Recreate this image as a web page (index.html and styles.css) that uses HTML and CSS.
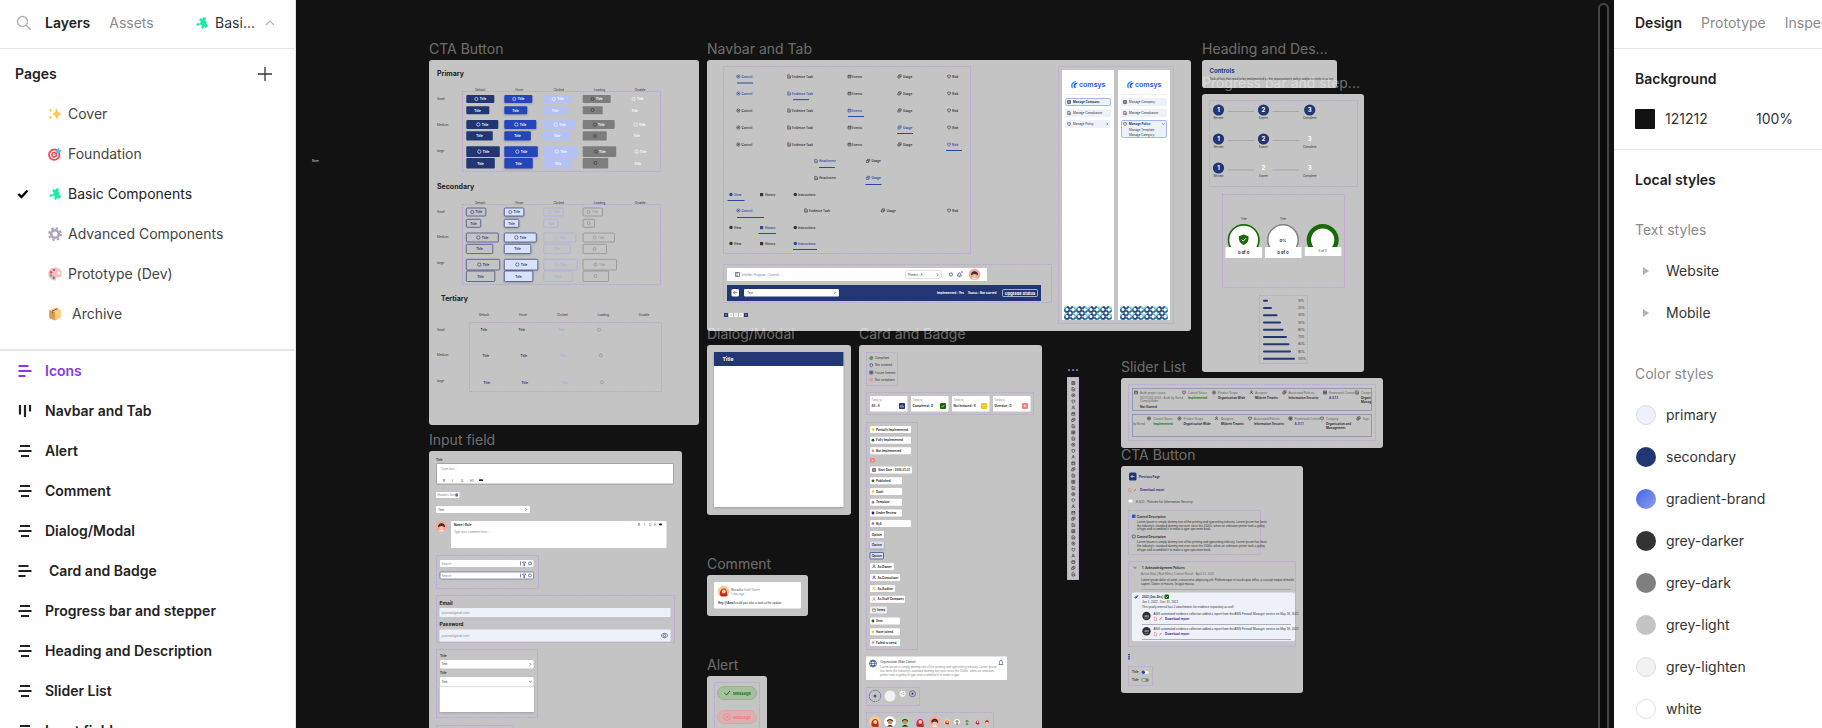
FILE: index.html
```html
<!DOCTYPE html>
<html lang="en">
<head>
<meta charset="utf-8">
<title>Basic Components</title>
<meta name="viewport" content="width=device-width, initial-scale=1">
<link rel="stylesheet" href="styles.css">
</head>
<body>
<svg class="sprite" width="0" height="0" aria-hidden="true">
  <defs>
    <symbol id="puzzle" viewBox="0 0 14 14"><g fill="#1de9a0" transform="rotate(30 7 7)"><path d="M3 3.600h2.500a1.800 1.800 0 1 1 2.800 0h2.500v2.500a1.800 1.800 0 1 1 0 2.800v2.700H8.500a1.700 1.700 0 1 0-3 0H3V9a1.700 1.700 0 1 0 0-3z"/></g></symbol>
    <symbol id="lines-center" viewBox="0 0 14 14"><path d="M2 2h10M.5 7h13M3 12h8"/></symbol>
    <symbol id="lines-left" viewBox="0 0 14 14"><path d="M.5 2h10M.5 7h13M.5 12h7"/></symbol>
    <symbol id="lines-top" viewBox="0 0 14 14"><path d="M2 1v9.500M7 1v12M12 1v6.500"/></symbol>
    <pattern id="rings" x="1064" y="306" width="12" height="7" patternUnits="userSpaceOnUse">
      <rect width="12" height="7" fill="#fff"/>
      <g fill="none" stroke-width="1.300"><circle cx="3" cy="3.500" r="2.200" stroke="#21417c"/><circle cx="9" cy="3.500" r="2.200" stroke="#5fb7c6"/><circle cx="0" cy="0" r="2.200" stroke="#7cc9d3"/><circle cx="12" cy="0" r="2.200" stroke="#7cc9d3"/><circle cx="6" cy="0" r="2.200" stroke="#21417c"/><circle cx="0" cy="7" r="2.200" stroke="#2d6296"/><circle cx="12" cy="7" r="2.200" stroke="#2d6296"/><circle cx="6" cy="7" r="2.200" stroke="#21417c"/></g>
    </pattern>
    <g id="face"><circle r="5.800"/><path fill="#3b2320" d="M-3.300.5C-4-4.500 4-4.500 3.300.5L2 1h-4z"/><circle cy=".8" r="2.200" fill="#f3c9a5"/><path fill="#3b2320" d="M-2.300.2C-1.500-2 1.500-2 2.300.2L0-.4z"/><path fill="#f7ead8" d="M-2.800 5C-2 2.700 2 2.700 2.800 5z"/></g>
    <g id="face-red"><circle r="5.800"/><path fill="#c62f2b" d="M-3.400 4C-5-4 4-6 3.600 2.500L4 4.500z"/><circle cx=".3" r="1.900" fill="#f8cfae"/><path fill="#b4231f" d="M-2.800 4.700C-2 2.200 2.300 2.200 3.300 4.700z"/></g>
    <g id="face-dark"><circle r="5.800"/><path fill="#39241e" d="M-3-.5C-3.500-4 3.500-4 3-.5z"/><circle cy=".2" r="2.200" fill="#c98f68"/><path fill="#333" d="M-3 4.800C-2 2.400 2 2.400 3 4.800z"/></g>
    <g id="ic1"><circle r="1.600"/><path d="M-.8 0H.8M0-.8V.8"/></g>
    <g id="ic2"><path d="M-1.300-1.600H.6l.8.8v2.400h-2.700zM-.6.3H.8"/></g>
    <g id="ic3"><path d="M-1.500-1.200h3v2.600h-3zM-1.500-.4h3M-.7-1.200v-.5M.7-1.200v-.5"/></g>
    <g id="ic4"><path d="M-1.600-.5h2v2h-2zM-.7-.5v-1.200h2.300v2H.4"/></g>
    <g id="ic5"><path d="M-1.400-1.200Q0-1.200 0-1.700 0-1.200 1.400-1.200 1.700 1.200 0 1.700-1.700 1.200-1.400-1.200z"/></g>
    <g id="ic6"><path d="M-1.500 1.500C-1.300-.2 1.300-.2 1.500 1.500M0-1.600a.8.800 0 0 1 0 1.600.8.800 0 0 1 0-1.600"/></g>
    <g id="ic7"><path d="M-1.500-1.500h3v3h-3zM-1.500 0h3M0-1.500v3"/></g>
    <g id="file-icons"><path class="s-red" d="M-1.200-1.500h1.500l.9.900v2.300h-2.400z"/><path class="s-olive" d="M4 1.300 6-1.200"/></g>
  </defs>
</svg>

<main class="app">
  <aside class="layers">
    <header class="layers-head">
      <svg class="search" width="16" height="16" viewBox="0 0 16 16" aria-hidden="true"><circle cx="6.500" cy="6.500" r="5"/><path d="m10.200 10.200 4.500 4.500"/></svg>
      <nav class="tabs"><button class="tab tab--on">Layers</button><button class="tab">Assets</button></nav>
      <button class="page-pick"><svg width="14" height="14" aria-hidden="true"><use href="#puzzle"/></svg><span>Basi...</span><svg class="caret" width="10" height="6" viewBox="0 0 10 6" aria-hidden="true"><path d="m1 5 4-4 4 4"/></svg></button>
    </header>
    <section class="pages">
      <div class="pages-head"><h2>Pages</h2><button class="add" aria-label="Add page"><svg width="14" height="14" viewBox="0 0 14 14"><path d="M7 0v14M0 7h14"/></svg></button></div>
      <ul class="list">
        <li><button class="page"><i></i><svg width="14" height="14" viewBox="0 0 14 14"><path fill="#fcc84b" d="M8.800.8c.7 3.600 1.300 4.900 4.900 6.200-3.600 1.300-4.200 2.600-4.900 6.200C8 9.600 7.300 8.300 4 7 7.300 5.700 8 4.400 8.800.8zM2.600 1.200c.3 1.300.6 1.600 1.800 2-1.200.4-1.500.7-1.800 2-.3-1.300-.6-1.600-1.800-2 1.200-.4 1.500-.7 1.800-2zM2.300 8.300c.3 1.400.7 1.700 2 2.200-1.300.5-1.700.8-2 2.200-.3-1.400-.7-1.700-2-2.200 1.300-.5 1.700-.8 2-2.200z"/></svg>Cover</button></li>
        <li><button class="page"><i></i><svg width="14" height="14" viewBox="0 0 14 14"><circle cx="6.200" cy="7.700" r="5.200" fill="#fff" stroke="#f2484b" stroke-width="1.800"/><circle cx="6.200" cy="7.700" r="2.200" fill="#fff" stroke="#f2484b" stroke-width="1.600"/><path stroke="#3a8fd0" stroke-width="1" d="m6.200 7.700 4-4"/><path fill="#58b7f4" d="m7.500 4.200 3-3.700.6 2.200 2.600.5-3 3.200-3-.3z"/></svg>Foundation</button></li>
        <li><button class="page page--on"><i><svg width="12" height="10" viewBox="0 0 12 10"><path d="m1.500 5 3 3 6-6.500"/></svg></i><svg width="14" height="14"><use href="#puzzle"/></svg>Basic Components</button></li>
        <li><button class="page"><i></i><svg width="14" height="14" viewBox="0 0 14 14"><circle cx="7" cy="7" r="5.800" fill="none" stroke="#aea3bb" stroke-width="2.200" stroke-dasharray="2.400 2.155"/><circle cx="7" cy="7" r="3.800" fill="none" stroke="#aea3bb" stroke-width="2.600"/></svg>Advanced Components</button></li>
        <li><button class="page"><i></i><svg width="14" height="14" viewBox="0 0 14 14"><path fill="#fdbfb2" fill-rule="evenodd" d="M7 .6c4 0 6.800 2.700 6.800 5.900 0 3-2 4-4.100 3.700-1.300-.1-1.700.6-1.500 1.500.3 1.300-.5 1.900-1.700 1.800C3 13.300.3 10.700.3 7S3.200.6 7 .6zm3.900 4a1.400 1.400 0 1 0 0 2.800 1.400 1.400 0 0 0 0-2.800z"/><circle cx="6" cy="3" r="1.200" fill="#8b6cf0"/><circle cx="3" cy="5.200" r="1.200" fill="#f0349c"/><circle cx="3" cy="8.500" r="1.200" fill="#2ac77f"/><circle cx="5.800" cy="10.800" r="1.200" fill="#6f63ee"/></svg>Prototype (Dev)</button></li>
        <li><button class="page page--indent"><i></i><svg width="14" height="14" viewBox="0 0 14 14"><path fill="#fdcb7d" d="M1.300 3.200 7.800.6l5 2.200v7.700l-5.600 3-5.900-2.500z"/><path fill="#e09b4c" d="m1.300 3.200 5.900 2.200v8.100l-5.900-2.500z"/><path fill="#8d6748" d="m3.900 3.600 5.500-2.400 1.100.5-5.400 2.500v2.600l-1.200-.6z"/></svg>Archive</button></li>
      </ul>
    </section>
    <ul class="list list--layers">
      <li><button class="layer layer--component"><svg width="14" height="14"><use href="#lines-left"/></svg>Icons</button></li>
      <li><button class="layer"><svg width="14" height="14"><use href="#lines-top"/></svg>Navbar and Tab</button></li>
      <li><button class="layer"><svg width="14" height="14"><use href="#lines-center"/></svg>Alert</button></li>
      <li><button class="layer"><svg width="14" height="14"><use href="#lines-center"/></svg>Comment</button></li>
      <li><button class="layer"><svg width="14" height="14"><use href="#lines-center"/></svg>Dialog/Modal</button></li>
      <li><button class="layer layer--indent"><svg width="14" height="14"><use href="#lines-left"/></svg>Card and Badge</button></li>
      <li><button class="layer"><svg width="14" height="14"><use href="#lines-center"/></svg>Progress bar and stepper</button></li>
      <li><button class="layer"><svg width="14" height="14"><use href="#lines-center"/></svg>Heading and Description</button></li>
      <li><button class="layer"><svg width="14" height="14"><use href="#lines-center"/></svg>Slider List</button></li>
      <li><button class="layer"><svg width="14" height="14"><use href="#lines-center"/></svg>Input field</button></li>
    </ul>
  </aside>

  <section class="canvas" aria-label="Canvas">
    <p class="note">Note</p>

    <article class="frame frame--cta">
      <h3>CTA Button</h3>
      <svg width="270" height="365" viewBox="429 60 270 365">
        <g class="h"><text x="437" y="76">Primary</text><text x="437" y="188.500">Secondary</text><text x="441" y="301">Tertiary</text></g>
        <g class="dash"><rect x="462.500" y="91.500" width="198" height="80"/><rect x="462.500" y="204.500" width="198" height="80"/><rect x="469.500" y="322.500" width="192" height="69"/></g>
        <g class="t m" id="cols"><text x="480.300" y="90.500">Default</text><text x="519.500" y="90.500">Hover</text><text x="558.700" y="90.500">Clicked</text><text x="599.500" y="90.500">Loading</text><text x="640.300" y="90.500">Disable</text></g>
        <use href="#cols" y="113"/><use href="#cols" x="3.700" y="225.500"/>
        <g class="t" id="sizes"><text x="437" y="100">Small</text><text x="437" y="125.700">Medium</text><text x="437" y="151.500">large</text></g>
        <use href="#sizes" y="112.800"/><use href="#sizes" y="230.800"/>
        <defs>
          <g id="boxes"><rect y="95" width="28" height="8" rx="1"/><rect y="106.300" width="23" height="8" rx="1"/><rect y="120" width="32" height="9" rx="1"/><rect y="131.300" width="26.500" height="9.300" rx="1"/><rect y="146.300" width="33.500" height="10.700" rx="1"/><rect y="158" width="28.500" height="10.500" rx="1"/></g>
          <g id="gboxes"><rect y="95" width="28" height="8" rx="1"/><rect y="106.300" width="20" height="8" rx="1"/><rect y="120" width="32" height="9" rx="1"/><rect y="131.300" width="24" height="9.300" rx="1"/><rect y="146.300" width="33.500" height="10.700" rx="1"/><rect y="158" width="25.500" height="10.500" rx="1"/></g>
          <g id="biglabels"><circle class="ring" cx="12" cy="124.500" r="1.700"/><text x="15.500" y="125.800">Title</text><text x="10" y="137.300">Title</text><circle class="ring" cx="13" cy="151.600" r="1.700"/><text x="16.500" y="153">Title</text><text x="11" y="164.500">Title</text></g>
          <g id="labels"><circle class="ring" cx="10" cy="99" r="1.600"/><text x="13.500" y="100.300">Title</text><text x="8" y="111.500">Title</text><use href="#biglabels"/></g>
          <g id="obig"><rect y="120" width="32" height="9" rx="1"/><rect y="131.300" width="26.500" height="9.300" rx="1"/><rect y="146.300" width="33.500" height="10.700" rx="1"/><rect y="158" width="28.500" height="10.500" rx="1"/><rect y="95" width="19.500" height="8" rx="1"/><rect y="106.300" width="14.500" height="8" rx="1"/></g>
          <g id="olabels"><circle class="ring" cx="6" cy="99" r="1.600"/><text x="9.300" y="100.300">Title</text><text x="4" y="111.500">Title</text><use href="#biglabels"/></g>
        </defs>
        <use href="#boxes" x="466.300" class="f-navy"/><use href="#boxes" x="504.300" class="f-blue drop"/><use href="#boxes" x="543.700" class="f-peri"/><use href="#gboxes" x="582.700" class="f-grey"/>
        <g class="t b white"><use href="#labels" x="466.300"/><use href="#labels" x="504.300"/><use href="#labels" x="543.700"/><use href="#labels" x="623.600"/></g>
        <g class="t b white"><text x="596" y="100.300">Title</text><text x="598" y="125.800">Title</text><text x="599" y="153">Title</text></g>
        <g class="thin s-dark"><circle cx="592.500" cy="99" r="1.500"/><circle cx="592.500" cy="110" r="1.500"/><circle cx="595" cy="124.500" r="1.500"/><circle cx="595" cy="136" r="1.500"/><circle cx="596" cy="151.600" r="1.500"/><circle cx="595.500" cy="163" r="1.500"/></g>
        <use href="#obig" x="466.300" y="113" class="o-navy"/><use href="#obig" x="504.300" y="113" class="o-navy f-pale drop"/><use href="#obig" x="543.700" y="113" class="o-peri"/>
        <g class="o-grey"><rect x="583" y="208" width="19.500" height="8" rx="1"/><rect x="583" y="219.300" width="11.500" height="8" rx="1"/><rect x="583" y="233" width="31.500" height="9" rx="1"/><rect x="583" y="244.300" width="23.500" height="9.300" rx="1"/><rect x="583" y="259.300" width="33.500" height="10.700" rx="1"/><rect x="583" y="271" width="25.500" height="10.500" rx="1"/></g>
        <g class="t b navy"><use href="#olabels" x="466.300" y="113"/><use href="#olabels" x="504.300" y="113"/></g>
        <g class="t b peri"><use href="#olabels" x="543.700" y="113"/></g>
        <g class="t grey"><text x="592" y="213.300">Title</text><text x="598" y="238.800">Title</text><text x="599" y="266">Title</text></g>
        <g class="thin s-grey"><circle cx="588.500" cy="212" r="1.500"/><circle cx="588.500" cy="223" r="1.500"/><circle cx="594.500" cy="237.500" r="1.500"/><circle cx="594.500" cy="249" r="1.500"/><circle cx="595.500" cy="264.600" r="1.500"/><circle cx="595.500" cy="276" r="1.500"/><circle cx="599" cy="329.700" r="1.500"/><circle cx="601" cy="355.500" r="1.500"/><circle cx="602" cy="382.300" r="1.500"/></g>
        <g class="t b navy" id="ttl"><text x="480.500" y="331">Title</text><text x="482.500" y="356.800">Title</text><text x="483.500" y="383.600">Title</text></g>
        <use href="#ttl" x="38"/>
        <g class="t b peri"><text x="558" y="331">Title</text><text x="560" y="356.800">Title</text><text x="561" y="383.600">Title</text></g>
      </svg>
    </article>

    <article class="frame frame--nav">
      <h3>Navbar and Tab</h3>
      <svg width="484" height="271" viewBox="707 60 484 271">
        <defs>
          <g id="n1"><use href="#ic1" x="738.300" y="76.500"/><text x="741.500" y="77.600">Control</text></g>
          <g id="n2"><use href="#ic2" x="789" y="76.500"/><text x="792" y="77.600">Evidence Task</text></g>
          <g id="n3"><use href="#ic3" x="849.500" y="76.500"/><text x="852" y="77.600">Events</text></g>
          <g id="n4"><use href="#ic4" x="899.500" y="76.500"/><text x="903" y="77.600">Usage</text></g>
          <g id="n5"><use href="#ic5" x="949" y="76.500"/><text x="952" y="77.600">Risk</text></g>
          <g id="n6"><use href="#ic2" x="816" y="76.500"/><text x="819" y="77.600">Attachment</text></g>
          <g id="n7"><circle class="dot" cx="731" cy="76.500" r="1.700"/><text x="734" y="77.600">View</text></g>
          <g id="n8"><rect class="dot" x="760" y="75" width="3.200" height="3.200" rx=".6"/><text x="765" y="77.600">History</text></g>
          <g id="n9"><circle class="dot" cx="795.300" cy="76.500" r="1.700"/><text x="798" y="77.600">Instructions</text></g>
        </defs>
        <g class="dash"><rect x="723.500" y="66.500" width="247" height="187"/><rect x="723.500" y="264.500" width="328" height="38"/><rect x="1058.500" y="66.500" width="115" height="257"/></g>
        <g class="tab-t"><use href="#n1" class="on"/><use href="#n2"/><use href="#n3"/><use href="#n4"/><use href="#n5"/></g>
        <g class="tab-t" transform="translate(0 17)"><use href="#n1" class="on"/><use href="#n2" class="on"/><use href="#n3"/><use href="#n4"/><use href="#n5"/></g>
        <g class="tab-t" transform="translate(0 34)"><use href="#n1"/><use href="#n2"/><use href="#n3" class="on"/><use href="#n4"/><use href="#n5"/></g>
        <g class="tab-t" transform="translate(0 51)"><use href="#n1"/><use href="#n2"/><use href="#n3"/><use href="#n4" class="on"/><use href="#n5"/></g>
        <g class="tab-t" transform="translate(0 68)"><use href="#n1"/><use href="#n2"/><use href="#n3"/><use href="#n4"/><use href="#n5" class="on"/></g>
        <g class="tab-t"><use href="#n6" y="84.500" class="on"/><use href="#n4" x="-31.500" y="84.500"/><use href="#n6" y="101.500"/><use href="#n4" x="-31.500" y="101.500" class="on"/></g>
        <g class="tab-t"><use href="#n7" y="118" class="on"/><use href="#n8" y="118"/><use href="#n9" y="118"/></g>
        <g class="tab-t"><use href="#n1" y="134" class="on"/><use href="#n2" x="17" y="134"/><use href="#n4" x="-16.500" y="134"/><use href="#n5" y="134"/></g>
        <g class="tab-t"><use href="#n7" y="151"/><use href="#n8" y="151" class="on"/><use href="#n9" y="151"/></g>
        <g class="tab-t"><use href="#n7" y="167"/><use href="#n8" y="167"/><use href="#n9" y="167" class="on"/></g>
        <path class="under" d="M737 83h16M793 99.700h16M848 116.500h16M897 133.500h16M946 150.500h16M819 167.500h16M865.500 184.500h16M727.500 200.500h17M737 217.500h27M758.500 233.500h17.500M793 249.500h24"/>
        <rect class="f-white" x="727" y="268" width="260" height="13"/>
        <path class="thin s-navy" d="M735.500 272.500h4v4h-4zM737 272.500v4"/>
        <text class="t peri2" x="742" y="275.600">InfoSec Program / Control</text>
        <rect class="o-line" x="905.500" y="270.500" width="36" height="8" rx="2"/><text class="t" x="908" y="275.600">Project : A</text><path class="thin s-dark" d="m937 273.500 1.300 1.300-1.300 1.300"/>
        <rect x="948.300" y="271.800" width="5.500" height="5.500" rx="1" class="f-ice"/><rect x="956.700" y="271.800" width="5.500" height="5.500" rx="1" class="f-ice"/>
        <g class="thin s-navy"><circle cx="951" cy="274.500" r="1.600"/><path d="M957.500 276c.8-1.200.3-3.200 1.900-3.200s1.100 2 1.900 3.200zM959 277h.8"/></g><circle class="f-red" cx="962" cy="272" r="1"/>
        <use href="#face" x="974.500" y="274.500" class="f-pink"/>
        <rect class="f-navy" x="727" y="285" width="314" height="16"/>
        <rect class="f-white" x="731.500" y="289" width="7.500" height="7.500" rx="1.500"/><path class="thin s-navy" d="M733.500 292.700h3.600M735 291.200l-1.500 1.500 1.500 1.500"/>
        <rect class="f-white" x="744" y="289" width="95" height="7.500" rx="1"/><text class="t" x="747" y="294">Text</text><path class="thin s-dark" d="m834 291.500 1.300 1.300-1.300 1.300"/>
        <g class="t b white"><text x="937" y="294">Implemented : Yes</text><text x="968" y="294">Status : Not started</text></g>
        <rect class="o-white" x="1002.500" y="289.500" width="35" height="7" rx="1"/><text class="t4 b m white" x="1020" y="294.500">Upgrade Status</text>
        <g class="f-navy"><rect x="724" y="313" width="4" height="4" rx=".6"/><rect x="744" y="313" width="4" height="4" rx=".6"/></g>
        <g class="f-white"><rect x="729" y="313" width="4" height="4" rx="1"/><rect x="734" y="313" width="4" height="4" rx="1"/><rect x="739" y="313" width="4" height="4" rx="1"/></g>
        <g class="thin s-grey"><path d="M731 314v2M735.300 315h1.400M741 314v2"/></g><g class="thin s-white"><path d="m726.500 314-1 1 1 1M745.500 314l1 1-1 1"/></g>
        <g id="side"><rect class="f-white" x="1062" y="70" width="52" height="250"/>
          <path fill="#1fa0e8" d="M1071 86c0-3 2-4.500 5.300-5.200-.8 2-2.300 2.200-3.300 3.400-.8 1-.6 2.400.4 4.300-1.500-.3-2.400-1.200-2.400-2.500z"/><path fill="#2554e8" d="M1073.500 86c0-2 1.500-3.200 4.500-3.400-.6 1.600-2.200 1.500-2.700 3-.3 1 .2 1.700 1 2.600-1.700 0-2.800-.8-2.800-2.200z"/>
          <text class="logo" x="1079" y="86.500">comsys</text><path class="hair" d="M1065 94.500h46"/>
          <rect x="1064" y="306" width="48" height="14" fill="url(#rings)"/></g>
        <use href="#side" x="56"/>
        <g class="f-ice"><rect class="o-peri2" x="1065.500" y="98.500" width="45" height="7" rx="1.500"/><rect x="1065" y="109" width="46" height="8" rx="1.500"/><rect x="1065" y="120" width="46" height="8" rx="1.500"/><rect x="1121" y="98" width="46" height="8" rx="1.500"/><rect x="1121" y="109" width="46" height="8" rx="1.500"/><rect class="o-peri2" x="1121.500" y="120.500" width="45" height="17" rx="1.500"/></g>
        <g class="s-dark thin"><use href="#ic7" x="1069" y="102"/><use href="#ic2" x="1069" y="113"/><use href="#ic5" x="1069" y="124"/><use href="#ic7" x="1125" y="102"/><use href="#ic2" x="1125" y="113"/><use href="#ic5" x="1125" y="124"/><path d="m1106.500 122.700 1.300 1.300-1.300 1.300M1162 123.500l1.200 1 1.200-1"/></g>
        <g class="t"><text class="b navy" x="1073" y="103.300">Manage Company</text><text x="1073" y="114.300">Manage Compliance</text><text x="1073" y="125.300">Manage Policy</text><text x="1129" y="103.300">Manage Company</text><text x="1129" y="114.300">Manage Compliance</text><text class="b navy" x="1129" y="125.300">Manage Policy</text><text x="1129" y="130.800">Manage Template</text><text x="1129" y="136.300">Manage Category</text></g>
      </svg>
    </article>

    <article class="frame frame--heading">
      <h3>Heading and Des...</h3>
      <svg width="135" height="28" viewBox="1202 60 135 28">
        <text class="h6 navy" x="1209.500" y="72.700">Controls</text>
        <text class="t long" x="1209.500" y="79.600">Task of lists that need to be implemented by the organization's policy and/or controls in active</text>
      </svg>
    </article>

    <article class="frame frame--progress">
      <h3>Progress bar and step...</h3>
      <svg width="162" height="278" viewBox="1202 94 162 278">
        <g class="dash"><rect x="1209.500" y="100.500" width="148" height="86"/><rect x="1222.500" y="194.500" width="122" height="93"/><rect x="1259.500" y="295.500" width="48" height="68"/></g>
        <g id="stepbase"><path class="rail" d="M1227.500 111.500h26.500M1272.500 111.500h26.500"/><g class="t m"><text x="1218.500" y="118.600">Review</text><text x="1263.500" y="118.600">Expert</text><text x="1309.700" y="118.600">Complete</text></g></g>
        <use href="#stepbase" y="29"/><use href="#stepbase" y="58.500"/>
        <g class="f-navy"><circle cx="1218.500" cy="110" r="5.600"/><circle cx="1263.500" cy="110" r="5.600"/><circle cx="1309.700" cy="110" r="5.600"/><circle cx="1218.500" cy="139" r="5.600"/><circle cx="1263.500" cy="139" r="5.600"/><circle cx="1218.500" cy="168" r="5.600"/></g>
        <g class="h6 m white" id="nums"><text x="1218.500" y="112.200">1</text><text x="1263.500" y="112.200">2</text><text x="1309.700" y="112.200">3</text></g>
        <use href="#nums" y="29"/><use href="#nums" y="58"/>
        <g class="t m"><text x="1243.700" y="219.700">Title</text><text x="1283" y="219.700">Title</text></g>
        <g class="f-white"><circle cx="1243.700" cy="240" r="15.200" stroke="#186a08" stroke-width="1.700"/><circle cx="1283" cy="240" r="15.200" stroke="#808080" stroke-width="1.500"/><circle cx="1322.700" cy="240" r="13.800" stroke="#186a08" stroke-width="4.400"/></g>
        <rect x="1225" y="247" width="118" height="12" fill="#c4c4c4"/>
        <g class="f-white"><rect x="1225.500" y="247" width="36.500" height="11"/><rect x="1265" y="247" width="36.500" height="11"/><rect x="1304.800" y="247" width="36.500" height="9"/></g>
        <path fill="#186a08" d="m1243.700 234.500 4.800 1.800c.3 4-.6 6.800-4.800 8.700-4.200-1.900-5.100-4.700-4.800-8.700z"/><path class="s-white mid" d="m1241.700 239.700 1.500 1.500 2.700-2.900"/>
        <g class="t4 b m"><text x="1243.700" y="254">0 of 0</text><text x="1283" y="254">0 of 0</text><text x="1283" y="241.600">0%</text></g><text class="t m" x="1322.700" y="251.500">0 of 0</text>
        <path class="bar" d="M1264 300.700h3M1264 308h7M1264 315.200h12.500M1264 322.500h16M1264 329.700h18.500M1264 337h22M1264 344.200h24.500M1264 351.500h26M1264 358.700h30"/>
        <g class="t"><text x="1298" y="301.800">10%</text><text x="1298" y="309">20%</text><text x="1298" y="316.300">40%</text><text x="1298" y="323.600">50%</text><text x="1298" y="330.800">60%</text><text x="1298" y="338">70%</text><text x="1298" y="345.300">80%</text><text x="1298" y="352.500">90%</text><text x="1298" y="359.800">100%</text></g>
      </svg>
    </article>

    <article class="frame frame--dialog">
      <h3>Dialog/Modal</h3>
      <svg width="144" height="170" viewBox="707 345 144 170">
        <rect class="f-white drop" x="714" y="352" width="129.500" height="155"/><rect class="f-navy" x="714" y="352" width="129.500" height="14"/><text class="t5 b white" x="722.500" y="360.700">Title</text>
      </svg>
    </article>

    <article class="frame frame--card">
      <h3>Card and Badge</h3>
      <svg width="183" height="400" viewBox="859 345 183 400">
        <g class="dash"><rect x="866.500" y="352.500" width="31" height="33"/><rect x="866.500" y="392.500" width="167" height="22"/><rect x="866.500" y="422.500" width="51" height="227"/><rect x="866.500" y="687.500" width="53" height="18"/><rect x="866.500" y="712.500" width="127" height="30"/></g>
        <g class="thin"><use href="#ic1" x="871.300" y="358" class="s-green"/><use href="#ic5" x="871.300" y="365.300" class="s-navy"/><use href="#ic7" x="871.300" y="372.500" class="s-navy"/><use href="#ic1" x="871.300" y="379.800" class="s-red"/></g>
        <g class="t"><text x="875" y="359">Compliant</text><text x="875" y="366.300">Not initiated</text><text x="875" y="373.500">Future Interest</text><text x="875" y="380.800">Not compliant</text></g>
        <g class="f-white"><rect x="870" y="396" width="37.500" height="15.500" rx="1"/><rect x="911" y="396" width="37.500" height="15.500" rx="1"/><rect x="952" y="396" width="37.500" height="15.500" rx="1"/><rect x="993" y="396" width="37.500" height="15.500" rx="1"/></g>
        <g class="t grey"><text x="871.500" y="400.500">Task(s)</text><text x="912.500" y="400.500">Task(s)</text><text x="953.500" y="400.500">Task(s)</text><text x="994.500" y="400.500">Task(s)</text></g>
        <g class="t b"><text x="871.500" y="407.300">All : 8</text><text x="912.500" y="407.300">Completed : 0</text><text x="953.500" y="407.300">Not Initiated : 8</text><text x="994.500" y="407.300">Overdue : 0</text></g>
        <rect class="f-navy" x="899" y="403" width="6" height="6" rx="1"/><rect class="f-green" x="940" y="403" width="6" height="6" rx="1"/><rect class="f-yellow" x="981" y="403" width="6" height="6" rx="1"/><rect class="f-red" x="1022" y="403" width="6" height="6" rx="1"/>
        <path class="s-white thin" d="M900.700 407.500v-2M902 407.500v-3M903.300 407.500v-1.500M941.700 406l1 1 1.700-2M984 404.500v2M984 407.300v.4M1024 405l2 2M1026 405l-2 2"/>
        <g class="f-white">
          <rect x="870" y="426" width="41" height="7" rx="1"/><rect x="870" y="436.700" width="41" height="7" rx="1"/><rect x="870" y="447.300" width="41" height="7" rx="1"/><rect x="870" y="466.500" width="42" height="7" rx="1"/><rect x="870" y="477.300" width="32" height="7" rx="1"/><rect x="870" y="488" width="32" height="7" rx="1"/><rect x="870" y="498.700" width="32" height="7" rx="1"/><rect x="870" y="509.400" width="32" height="7" rx="1"/><rect x="870" y="520" width="41" height="7" rx="1"/><rect x="870" y="531" width="14" height="7" rx="1"/><rect x="870" y="563" width="24" height="7" rx="1"/><rect x="870" y="574" width="30" height="7" rx="1"/><rect x="870" y="585" width="25" height="7" rx="1"/><rect x="870" y="595.700" width="35" height="7" rx="1"/><rect x="870" y="617.500" width="30" height="7" rx="1"/><rect x="870" y="628.200" width="30" height="7" rx="1"/><rect x="870" y="639" width="30" height="7" rx="1"/>
          <rect x="866" y="656.500" width="141" height="23.500" rx="1"/>
        </g>
        <rect class="f-red" x="870" y="458" width="5" height="4.500" rx="1"/><path class="s-white thin" d="m871.700 459.500 1.600 1.600M873.300 459.500l-1.600 1.600"/><rect class="f-pale drop" x="870" y="541.500" width="14" height="7" rx="1"/><rect class="f-pale o-navy" x="870" y="552.500" width="13.500" height="6.500" rx=".6"/><rect fill="#eee" x="870" y="606.500" width="17" height="7" rx="1"/>
        <g class="f-yellow"><circle cx="873" cy="429.500" r="1.300"/><circle cx="873" cy="491.500" r="1.300"/><circle cx="873" cy="631.700" r="1.300"/></g>
        <g class="f-green"><circle cx="873" cy="440.200" r="1.400"/><circle cx="873" cy="480.800" r="1.400"/><circle cx="873" cy="621" r="1.400"/></g>
        <g class="f-red"><circle cx="873" cy="450.800" r="1.300"/><circle cx="873" cy="642.500" r="1.300"/></g>
        <g class="f-grey"><circle cx="873" cy="502.200" r="1.300"/><circle cx="873" cy="523.500" r="1.300"/></g><circle fill="#30108a" cx="873" cy="513" r="1.400"/>
        <g class="thin"><use href="#ic7" x="874" y="470" class="s-dark"/><use href="#ic6" x="874" y="566.500" class="s-green"/><use href="#ic6" x="874" y="577.500" class="s-purple"/><use href="#ic6" x="874" y="588.500" class="s-yellow"/><use href="#ic6" x="874" y="599.200" class="s-grey"/><use href="#ic3" x="874" y="610" class="s-grey"/></g>
        <g class="t b"><text x="876" y="430.600">Partially Implemented</text><text x="876" y="441.300">Fully Implemented</text><text x="876" y="452">Not Implemented</text><text class="long" x="878" y="471">Start Date : 0000-01-01</text><text x="876" y="481.900">Published</text><text x="876" y="492.600">Draft</text><text x="876" y="503.300">Template</text><text x="876" y="514">Under Review</text><text x="876" y="524.600">N/A</text><text x="872" y="535.600">Option</text><text x="872" y="546.100">Option</text><text x="872" y="557">Option</text><text x="877.500" y="567.600">As Owner</text><text x="877.500" y="578.600">As Consultant</text><text x="877.500" y="589.600">As Auditor</text><text x="877.500" y="600.300">As Staff Company</text><text x="877" y="611.100">Items</text><text x="876" y="622.100">Sent</text><text x="876" y="632.800">Have joined</text><text x="876" y="643.600">Failed to send</text></g>
        <g class="s-navy thin"><circle cx="873" cy="663.500" r="3.500"/><ellipse cx="873" cy="663.500" rx="1.600" ry="3.500"/><path d="M869.500 663.500h7M870.200 661.500h5.600M870.200 665.500h5.600M999 664.500c.8-1.200.3-4.500 2-4.500s1.200 3.300 2 4.500z"/></g>
        <text class="t long" x="880" y="663.200">Organization-Wide Control</text>
        <g class="t long grey"><text x="880" y="668.200">Lorem Ipsum is simply dummy text of the printing and typesetting industry. Lorem Ipsum</text><text x="880" y="672">has been the industry's standard dummy text ever since the 1500s, when an unknown</text><text x="880" y="675.800">printer took a galley of type and scrambled it to make a type.</text></g>
        <g class="s-navy thin"><circle cx="875" cy="696" r="5.700" stroke-dasharray="1.500 .7"/><circle cx="912.500" cy="693.700" r="3"/><path class="mid" d="M873.500 696h3M875 694.500v3M911.500 693.700h2M912.500 692.700v2"/></g>
        <circle fill="#f2f2f2" cx="890" cy="696" r="5.500"/><circle class="f-white" cx="902.500" cy="693.700" r="3"/><text class="t m" x="902.500" y="694.800">+3</text>
        <g><use href="#face-red" x="875" y="722" fill="#f7cf8f"/><use href="#face-dark" x="890" y="722" fill="#fff"/><use href="#face-dark" x="905" y="722" fill="#a8dcae"/><use href="#face-red" x="920" y="722" fill="#cdb8e8"/><use href="#face" x="934.700" y="722" class="f-pink"/></g>
        <g transform="translate(489 361) scale(.5)"><use href="#face-red" x="916" y="722" fill="#f7cf8f"/><use href="#face-dark" x="936" y="722" fill="#fff"/><use href="#face-dark" x="956" y="722" fill="#a8dcae"/><use href="#face-red" x="977" y="722" fill="#cdb8e8"/><use href="#face" x="996" y="722" class="f-pink"/></g>
      </svg>
    </article>

    <article class="frame frame--icons">
      <h3>...</h3>
      <svg width="12" height="203" viewBox="1067 377 12 203">
        <rect class="dash" x="1067.500" y="377.500" width="11" height="202"/>
        <g id="iset" class="s-dark thin"><use href="#ic7" x="1073.300" y="383"/><use href="#ic2" x="1073.300" y="389.200"/><use href="#ic1" x="1073.300" y="395.300"/><use href="#ic5" x="1073.300" y="401.500"/><use href="#ic6" x="1073.300" y="407.700"/><use href="#ic3" x="1073.300" y="413.900"/><use href="#ic4" x="1073.300" y="420"/><use href="#ic2" x="1073.300" y="426.200"/></g>
        <use href="#iset" y="49.400"/><use href="#iset" y="98.800"/><use href="#iset" y="148.200"/>
      </svg>
    </article>

    <article class="frame frame--slider">
      <h3>Slider List</h3>
      <svg width="262" height="70" viewBox="1121 378 262 70">
        <rect class="dash" x="1128.500" y="384.500" width="247" height="56"/>
        <g class="o-slate"><rect x="1132.500" y="388.500" width="239" height="22"/><rect x="1132.500" y="414.500" width="239" height="22"/></g>
        <g class="thin s-dark"><use href="#ic3" x="1136" y="392.500"/><use href="#ic5" x="1184" y="392.500"/><use href="#ic1" x="1214" y="392.500"/><use href="#ic6" x="1251.500" y="392.500"/><use href="#ic4" x="1284.500" y="392.500"/><use href="#ic7" x="1325" y="392.500"/><use href="#ic2" x="1357" y="392.500"/><use href="#ic1" x="1149" y="418.500"/><use href="#ic1" x="1179.500" y="418.500"/><use href="#ic6" x="1216.500" y="418.500"/><use href="#ic5" x="1250" y="418.500"/><use href="#ic7" x="1290.500" y="418.500"/><use href="#ic5" x="1322" y="418.500"/><use href="#ic4" x="1358.500" y="418.500"/></g>
        <g class="t long grey2"><text x="1140" y="393.600">Audit project status</text><text x="1188" y="393.600">Control Status</text><text x="1218" y="393.600">Product Scope</text><text x="1255" y="393.600">Assignee</text><text x="1288.500" y="393.600">Associated Policies</text><text x="1329" y="393.600">Framework Control</text><text x="1361" y="393.600">Catego</text><text x="1140" y="398.600">ISO27001:2013 - Audit by Bernd</text><text x="1140" y="402.300">ComplyGlobe</text><text x="1153.500" y="419.600">Control Status</text><text x="1183.500" y="419.600">Product Scope</text><text x="1221" y="419.600">Assignee</text><text x="1254" y="419.600">Associated Policies</text><text x="1294.500" y="419.600">Framework Control</text><text x="1326" y="419.600">Category</text><text x="1362.500" y="419.600">Tags</text><text x="1133" y="424.600">by Bernd</text></g>
        <g class="t b"><text x="1140" y="407.500">Not Started</text><text class="green" x="1188" y="398.600">Implemented</text><text x="1218" y="398.600">Organization Wide</text><text x="1255" y="398.600">Mijbren Tinanis</text><text x="1288.500" y="398.600">Information Security</text><text class="purple" x="1329" y="398.600">A.5.1.1</text><text x="1361" y="398.600">Organi</text><text x="1361" y="402.800">Manag</text><text class="green" x="1153.500" y="424.600">Implemented</text><text x="1183.500" y="424.600">Organization Wide</text><text x="1221" y="424.600">Mijbren Tinanis</text><text x="1254" y="424.600">Information Security</text><text class="purple" x="1294.500" y="424.600">A.5.1.1</text><text x="1326" y="424.600">Organization and</text><text x="1326" y="428.800">Management</text></g>
      </svg>
    </article>

    <article class="frame frame--cta2">
      <h3>CTA Button</h3>
      <svg width="182" height="227" viewBox="1121 466 182 227">
        <g class="dash"><rect x="1128.500" y="510.500" width="132" height="44"/><rect x="1128.500" y="561.500" width="167" height="85"/><rect x="1128.500" y="666.500" width="24" height="19"/></g>
        <rect class="f-navy" x="1129" y="472.500" width="7.500" height="8" rx="1.500"/><path class="s-white thin" d="M1131 476.500h3.600M1132.500 475l-1.500 1.500 1.500 1.500"/><text class="t b navy" x="1139" y="477.800">Previous Page</text>
        <use href="#file-icons" x="1130" y="490"/><text class="t b purple" x="1140" y="491.200">Download report</text>
        <rect class="f-white" x="1128.500" y="499.500" width="4" height="3" rx="1"/><text class="t" x="1136" y="502.500">A.5.1.1 - Policies for Information Security</text>
        <g id="desc"><text class="t b" x="1137" y="517.500">Control Description</text><g class="t long"><text x="1137" y="522.700">Lorem Ipsum is simply dummy text of the printing and typesetting industry. Lorem Ipsum has been</text><text x="1137" y="526.500">the industry's standard dummy text ever since the 1500s, when an unknown printer took a galley</text><text x="1137" y="530.400">of type and scrambled it to make a type specimen book.</text></g></g>
        <use href="#desc" y="20.300"/>
        <rect fill="#2f55c8" x="1132" y="514.500" width="3.500" height="3.500" rx=".6"/><rect class="thin s-navy" x="1132.300" y="535" width="3" height="3" rx=".6"/>
        <path class="s-navy thin" d="m1133.500 567 1.500 1.300 1.500-1.300"/><text class="t b" x="1142" y="568.700">1. Acknowledgement Policies</text>
        <text class="t long grey2" x="1141" y="574.900">Active Now | Risk Mitra | Control Result - April 21, 2022</text>
        <g class="t long"><text x="1141" y="581.400">Lorem ipsum dolor sit amet, consectetur adipiscing elit. Pellentesque et iaculis quis tellus, a suscipit neque id mattis</text><text x="1141" y="585.200">sapien. Donec et mauris, feugiat massa.</text></g>
        <path class="rail" d="M1141 589.500h150"/>
        <rect class="f-ice" x="1132" y="592.500" width="163" height="48.500" rx="1.500"/>
        <path class="s-navy mid" d="m1134.500 598 2.500-2.500M1135.500 598.500l2.500-3"/><text class="t long b" x="1142" y="597.700">2022 (Jan-Dec)</text><rect class="f-green" x="1164.500" y="594.500" width="4.500" height="4.500" rx="1"/><path class="s-white thin" d="m1165.700 596.800.8.800 1.300-1.500"/>
        <g class="t long"><text x="1142" y="603.300">Jan 1, 2022 - Dec 31, 2022</text><text x="1142" y="608.200">This yearly interval has 2 attachments for evidence repository as well</text><text x="1153.500" y="614.700">AWS automated evidence collection added a report from the AWS Firewall Manager service on May 18, 2022</text><text x="1153.500" y="630">AWS automated evidence collection added a report from the AWS Firewall Manager service on May 18, 2022</text></g>
        <g fill="#252f3e"><circle cx="1146.500" cy="616" r="4.200"/><circle cx="1146.500" cy="631.300" r="4.200"/></g><g class="tiny m"><text x="1146.500" y="616.600">AWS</text><text x="1146.500" y="631.900">AWS</text></g><path stroke="#ee9b2e" stroke-width=".6" d="M1144.500 618h4M1144.500 633.300h4"/>
        <use href="#file-icons" x="1155.500" y="618.700"/><use href="#file-icons" x="1155.500" y="634"/><g class="t b purple"><text x="1165" y="619.800">Download report</text><text x="1165" y="635">Download report</text></g>
        <path class="rail" d="M1142 624.500h149M1142 639.500h149"/>
        <path class="bar2" d="M1129 654v1.200M1129 656.200v1.200M1129 658.300v1.200"/>
        <g class="t b"><text x="1132" y="673.200">Title</text><text x="1132" y="681">Title</text></g>
        <rect class="f-white" x="1141.500" y="670.700" width="7" height="3" rx="1.500"/><circle class="f-blue" cx="1143.300" cy="672.200" r="1.700"/><rect class="o-grey" x="1141.500" y="678.500" width="7" height="3" rx="1.500"/><circle class="f-grey" cx="1147" cy="680" r="1.600"/>
      </svg>
    </article>

    <article class="frame frame--comment">
      <h3>Comment</h3>
      <svg width="101" height="41" viewBox="707 575 101 41">
        <rect class="f-white" x="714" y="582" width="87" height="26.500" rx="1"/><use href="#face-red" x="723.500" y="591.500" fill="#f7c98f"/>
        <g class="t grey"><text class="b" x="731" y="590.600">Natasha</text><text x="744" y="590.600">Staff Name</text><text x="731" y="594.800">1 day ago</text></g><text class="t long b" x="718" y="603.700">Hey @Amel</text><text class="t long" x="735" y="603.700">could you take a look at the update</text>
      </svg>
    </article>

    <article class="frame frame--alert">
      <h3>Alert</h3>
      <svg width="60" height="70" viewBox="707 676 60 70">
        <rect class="dash" x="714.500" y="682.500" width="45" height="60"/>
        <rect x="717.500" y="686.500" width="39" height="13" rx="6.500" fill="#a6bfa1" stroke="#86ac7e" stroke-width=".7"/><path class="mid s-green" stroke-width="1.300" d="m724.500 693 2 2 3.500-4"/><text class="t4 b green" x="733" y="694.700">Message</text>
        <rect x="717.500" y="710.500" width="39" height="13" rx="6.500" fill="#d9b1b0" stroke="#e79c9a" stroke-width=".7"/><g class="mid s-red"><circle cx="727" cy="717" r="3.300"/><path d="m725.800 715.800 2.400 2.400M728.200 715.800l-2.400 2.400"/></g><text class="t4 b red" x="733" y="718.500">Message</text>
      </svg>
    </article>

    <article class="frame frame--input">
      <h3>Input field</h3>
      <svg width="253" height="290" viewBox="429 451 253 290">
        <g class="dash"><rect x="436.500" y="555.500" width="102" height="33"/><rect x="436.500" y="595.500" width="238" height="47"/><rect x="436.500" y="649.500" width="101" height="68"/><rect x="436.500" y="725.500" width="77" height="20"/></g>
        <g class="t b"><text x="436" y="460.800">Title</text><text x="440" y="656.600">Title</text><text x="440" y="673.800">Title</text></g>
        <rect class="f-white" x="436.500" y="463.500" width="237" height="20.500" rx="1" stroke="#888" stroke-width=".7"/>
        <g class="f-white"><rect x="436" y="492" width="23.500" height="6" rx="1"/><rect x="436" y="506" width="94" height="7" rx="1"/><rect x="451" y="521" width="215.500" height="27" rx="1"/><rect x="440" y="560" width="93.500" height="7" rx="1"/><rect x="440" y="572" width="93.500" height="7" rx="1" stroke="#5b6a9a" stroke-width=".7"/><rect x="440" y="660" width="93.500" height="8.500" rx="1"/><rect x="440" y="677" width="93.500" height="9" rx="1"/><rect class="drop" x="439.700" y="686.500" width="94.300" height="25.500"/></g>
        <text class="t b" x="454" y="525.700">Name | Role</text>
        <g class="t grey"><text x="441" y="469.600">Type text...</text><text class="long" x="437.500" y="496">Headers form</text><text class="long" x="454" y="532.700">Type your comment here...</text><text x="441.500" y="564.600">Search</text><text x="441.500" y="576.600">Search</text></g>
        <g class="t"><text x="443" y="481.500">B</text><text x="452" y="481.500">I</text><text x="461" y="481.500">U</text><text x="470" y="481.500">H1</text><text x="438" y="510.600">Text</text><text x="638" y="525.700">B</text><text x="644" y="525.700">I</text><text x="649" y="525.700">U</text><text x="654" y="525.700">H</text><text x="441.500" y="665.300">Text</text><text x="441.500" y="682.600">Text</text></g>
        <rect fill="#222" x="479" y="479.300" width="4" height="1.800" rx=".6"/><rect fill="#222" x="659" y="523.500" width="3" height="1.800" rx=".6"/><rect fill="#5b6a9a" x="455.500" y="493.500" width="2.500" height="3"/>
        <use href="#face" x="441.500" y="526.500" class="f-pink"/>
        <g class="s-navy thin"><path d="m525.500 508.200 1.300 1.300-1.300 1.300M529.500 663l1.300 1.300-1.300 1.300M529 681l1.300 1.200 1.300-1.200"/><path id="filt" d="M520.500 561.500v4M522.500 562h3.300l-1.200 1.500v2.200h-.8v-2.200z"/><circle id="mag" cx="530" cy="563.500" r="1.500"/><use href="#filt" y="12"/><use href="#mag" y="12"/></g>
        <g class="t5 b"><text x="439.500" y="604.700">Email</text><text x="439.500" y="626.300">Password</text></g>
        <rect class="f-ice" x="439.500" y="608" width="231" height="9" rx="1"/><rect class="f-ice" x="439.500" y="629.500" width="231" height="12" rx="1"/>
        <g class="t grey"><text x="441.500" y="613.600">yourmail@mail.com</text><text x="441.500" y="636.600">yourmail@mail.com</text></g>
        <g class="s-navy thin"><path d="M661 635.500q3.500-4.600 7 0-3.500 4.600-7 0z"/><circle cx="664.500" cy="635.500" r="1.200"/></g>
      </svg>
    </article>

    <div class="scroll" aria-hidden="true"></div>
  </section>

  <aside class="inspector">
    <header class="inspector-head"><button class="tab tab--on">Design</button><button class="tab">Prototype</button><button class="tab">Inspect</button></header>
    <section class="block">
      <h2>Background</h2>
      <div class="paint"><span class="square"></span><span class="hex">121212</span><span>100%</span></div>
    </section>
    <section class="block block--styles">
      <h2>Local styles</h2>
      <h3>Text styles</h3>
      <ul class="list"><li><button class="style"><i class="tri"></i>Website</button></li><li><button class="style"><i class="tri"></i>Mobile</button></li></ul>
      <h3 class="gap">Color styles</h3>
      <ul class="list">
        <li><button class="style"><i class="chip chip--primary"></i>primary</button></li>
        <li><button class="style"><i class="chip chip--secondary"></i>secondary</button></li>
        <li><button class="style"><i class="chip chip--gradient"></i>gradient-brand</button></li>
        <li><button class="style"><i class="chip chip--darker"></i>grey-darker</button></li>
        <li><button class="style"><i class="chip chip--dark"></i>grey-dark</button></li>
        <li><button class="style"><i class="chip chip--light"></i>grey-light</button></li>
        <li><button class="style"><i class="chip chip--lighten"></i>grey-lighten</button></li>
        <li><button class="style"><i class="chip chip--white"></i>white</button></li>
      </ul>
    </section>
  </aside>
</main>
</body>
</html>
```
FILE: styles.css
```css
* { box-sizing: border-box; }
body { margin: 0; font: 14px/20px Inter, "Liberation Sans", sans-serif; color: #333; background: #fff; overflow: hidden; }
h2, h3, p, ul { margin: 0; padding: 0; font: inherit; }
button { border: 0; padding: 0; background: none; font: inherit; color: inherit; text-align: left; white-space: nowrap; cursor: pointer; }
svg { flex: none; }
.sprite { position: absolute; }
.app { display: flex; height: 100vh; }
.list { list-style: none; }

/* Left panel */
.layers { width: 296px; flex: none; border-right: 1px solid #e5e5e5; overflow: hidden; }
.layers-head { display: flex; align-items: center; height: 49px; padding: 0 20px 2px 16px; border-bottom: 1px solid #e5e5e5; }
.search { margin-right: 13px; fill: none; stroke: #b3b3b3; stroke-width: 1.5; }
.tabs { display: flex; gap: 19px; }
.tab { color: #8a8a8a; }
.tab--on, h2 { font-weight: 600; color: #222; }
.page-pick { display: flex; align-items: center; margin-left: auto; }
.page-pick span { margin: 0 10px 0 6px; }
.caret { fill: none; stroke: #b3b3b3; stroke-width: 1.2; }
.pages { padding: 5px 0 15px; border-bottom: 2px solid #e5e5e5; }
.pages-head { display: flex; align-items: center; justify-content: space-between; height: 40px; padding: 0 23px 0 15px; }
.add svg { display: block; stroke: #333; stroke-width: 1.3; }
.page { display: flex; align-items: center; gap: 6px; width: 100%; height: 40px; padding-left: 17px; color: #444; }
.page i { width: 25px; }
.page i svg { display: block; fill: none; stroke: #000; stroke-width: 2.4; }
.page--on { color: #222; }
.page--indent { gap: 10px; }
.page--indent i { margin-right: -4px; }
.layer { display: flex; align-items: center; gap: 13px; width: 100%; height: 40px; padding-left: 18px; font-weight: 600; color: #222; }
.layer svg { stroke: #222; stroke-width: 2.2; }
.layer--indent { gap: 17px; }
.layer--component { color: #8638e5; }
.layer--component svg { stroke: #8638e5; }

/* Canvas */
.canvas { position: relative; flex: 1; min-width: 0; overflow: hidden; background: #121212; }
.frame { position: absolute; }
.frame h3 { height: 20px; margin-bottom: 1px; white-space: nowrap; color: rgba(255, 255, 255, .4); }
.frame > svg { display: block; border-radius: 3px; background: #c4c4c4; font-family: Inter, sans-serif; }
.note { position: absolute; left: 16px; top: 156px; font-size: 3px; line-height: 10px; color: #ddd; }
.frame--cta { left: 133px; top: 39px; }
.frame--nav { left: 411px; top: 39px; }
.frame--heading { left: 906px; top: 39px; }
.frame--progress { left: 906px; top: 73px; }
.frame--dialog { left: 411px; top: 324px; }
.frame--card { left: 563px; top: 324px; }
.frame--icons { left: 771px; top: 356px; }
.frame--slider { left: 825px; top: 357px; }
.frame--cta2 { left: 825px; top: 445px; }
.frame--comment { left: 411px; top: 554px; }
.frame--alert { left: 411px; top: 655px; }
.frame--input { left: 133px; top: 430px; }
.frame--icons h3 { color: #b79fdb; }
.frame--icons > svg { border-radius: 0; }
.scroll { position: absolute; right: 5px; top: 3px; bottom: -20px; width: 11px; border: 2px solid #444; border-radius: 6px; background: #0b0b0b; }

/* Artboard text */
.h { font-size: 7px; font-weight: 700; fill: #222; }
.h6 { font-size: 6px; font-weight: 700; }
.t { font-size: 3px; fill: #333; }
.t4 { font-size: 4px; fill: #222; }
.t5 { font-size: 5px; fill: #222; }
.tiny { font-size: 2px; fill: #fff; }
.long { font-family: "Liberation Sans", Arial, sans-serif; }
.b { font-weight: 700; }
.m { text-anchor: middle; }
.logo { font-size: 7px; font-weight: 600; fill: #2457e6; }
.white { fill: #fff; color: #fff; }
.navy { fill: #233674; color: #233674; }
.peri { fill: #a3b1e0; color: #a3b1e0; }
.peri2 { fill: #6c7bb0; }
.grey { fill: #8a8a8a; }
.grey2 { fill: #666; }
.green { fill: #1d7a0c; }
.purple { fill: #4b1d9e; }
.red { fill: #f47c7a; }

/* Artboard shapes */
.dash { fill: none; stroke: #b79fdb; stroke-width: .8; stroke-dasharray: 2 1; }
.f-white { fill: #fff; }
.f-navy { fill: #233674; }
.f-blue { fill: #2546b9; }
.f-peri { fill: #b3c1f3; }
.f-pale { fill: #dae1fa; }
.f-grey { fill: #7d7d7d; }
.f-ice { fill: #edf1f9; }
.f-green { fill: #186a08; }
.f-yellow { fill: #e6cb1f; }
.f-red { fill: #fb7d7d; }
.f-pink { fill: #f6a8a0; }
.drop { filter: drop-shadow(0 1px 1px rgba(0, 0, 0, .2)); }
.o-navy { stroke: #3d4f8c; stroke-width: .8; }
.o-navy:not(.f-pale), .o-peri, .o-grey, .o-slate, .o-white, .o-line { fill: none; }
.o-peri { stroke: #a3b1e0; stroke-width: .7; }
.o-peri2 { stroke: #8fa3ec; stroke-width: .8; }
.o-grey { stroke: #8a8a8a; stroke-width: .7; }
.o-slate { stroke: #8088a8; stroke-width: .7; }
.o-white { stroke: #fff; stroke-width: .6; }
.o-line { stroke: #ccc; stroke-width: .6; }
.ring { fill: none; stroke: currentColor; stroke-width: .6; }
.thin { fill: none; stroke-width: .6; }
.mid { fill: none; stroke-width: 1; }
.s-dark { stroke: #333; }
.s-grey { stroke: #888; }
.s-navy { stroke: #233674; }
.s-white { stroke: #fff; }
.s-green { stroke: #186a08; }
.s-red { fill: none; stroke: #f47c7a; stroke-width: .6; }
.s-olive { fill: none; stroke: #8a7a3a; stroke-width: .8; }
.s-purple { stroke: #4b1d9e; }
.s-yellow { stroke: #d9c020; }
.tab-t { font-size: 3px; font-weight: 600; color: #333; }
.tab-t .on { color: #2b47a0; }
#n1 use, #n2 use, #n3 use, #n4 use, #n5 use, #n6 use { fill: none; stroke: currentColor; stroke-width: .6; }
#n1 text, #n2 text, #n3 text, #n4 text, #n5 text, #n6 text, #n7 text, #n8 text, #n9 text, .dot { fill: currentColor; }
.under { stroke: #2b47a0; stroke-width: 1; }
.hair { stroke: #e2e2e2; stroke-width: .6; }
.rail { stroke: #a0a0a0; stroke-width: .8; }
.bar { stroke: #233674; stroke-width: 2; stroke-linecap: round; }
.bar2 { stroke: #2546b9; stroke-width: 2; }

/* Right panel */
.inspector { width: 208px; flex: none; overflow: hidden; }
.inspector-head { display: flex; align-items: center; gap: 19px; height: 49px; padding: 0 0 2px 21px; border-bottom: 1px solid #e5e5e5; }
.block { padding: 10px 0 10px 21px; border-bottom: 1px solid #e5e5e5; }
.block h2, .block h3 { line-height: 40px; }
.block h3 { margin-top: 10px; color: #8a8a8a; }
.block h3.gap { margin-top: 20px; }
.block--styles { border: 0; }
.paint { display: flex; align-items: center; height: 40px; }
.square { width: 20px; height: 20px; margin-right: 10px; border-radius: 1px; background: #121212; }
.hex { width: 91px; }
.style { display: flex; align-items: center; gap: 10px; height: 42px; padding-left: 1px; }
.tri { width: 20px; height: 8px; background: #b3b3b3; clip-path: polygon(7px 0, 13px 4px, 7px 8px); }
.chip { width: 20px; height: 20px; border: 1px solid transparent; border-radius: 50%; background-clip: border-box; background-origin: border-box; }
.chip--primary { background-color: #edf1fb; border-color: #d9dbe2; }
.chip--secondary { background-color: #233674; }
.chip--gradient { background-image: linear-gradient(135deg, #4263eb, #8fa0e8); }
.chip--darker { background-color: #333; }
.chip--dark { background-color: #7f7f7f; }
.chip--light { background-color: #c4c4c4; }
.chip--lighten { background-color: #f2f2f2; border-color: #dcdcdc; }
.chip--white { background-color: #fff; border-color: #e2e2e2; }
```
